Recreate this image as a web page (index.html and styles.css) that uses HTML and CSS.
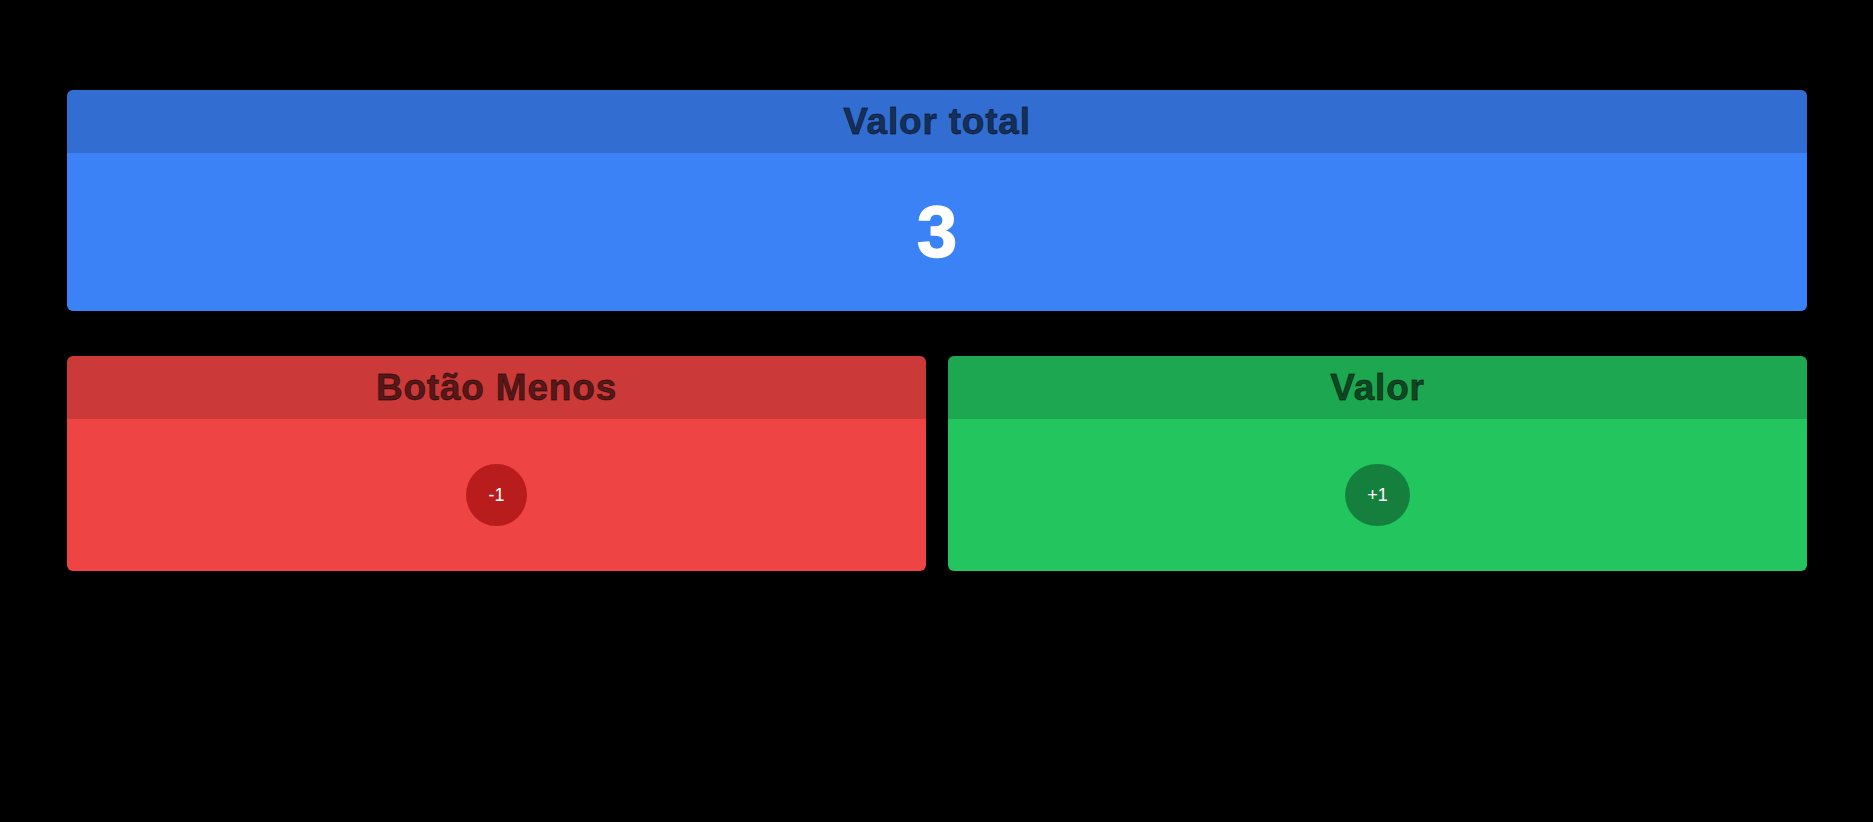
FILE: index.html
```html
<!DOCTYPE html>
<html lang="pt">
<head>
<meta charset="utf-8">
<title>Contador</title>
<link rel="stylesheet" href="styles.css">
</head>
<body>
<main class="page">
  <section class="card card-blue">
    <header class="card-header">Valor total</header>
    <div class="card-body">
      <span class="total">3</span>
    </div>
  </section>
  <div class="row">
    <section class="card card-red">
      <header class="card-header">Botão Menos</header>
      <div class="card-body">
        <button class="btn btn-red">-1</button>
      </div>
    </section>
    <section class="card card-green">
      <header class="card-header">Valor</header>
      <div class="card-body">
        <button class="btn btn-green">+1</button>
      </div>
    </section>
  </div>
</main>
</body>
</html>
```
FILE: styles.css
```css
html, body {
  margin: 0;
  padding: 0;
  background: #000;
  height: 100%;
}
body {
  font-family: "Liberation Sans", Arial, sans-serif;
}
.page {
  padding: 90px 66px 0 67px;
  display: flex;
  flex-direction: column;
  gap: 45px;
}
.row {
  display: grid;
  grid-template-columns: 1fr 1fr;
  gap: 22px;
}
.card {
  border-radius: 6px;
  overflow: hidden;
  display: flex;
  flex-direction: column;
}
.card-header {
  height: 63px;
  display: flex;
  align-items: center;
  justify-content: center;
  background: rgba(0, 0, 0, 0.15);
  color: rgba(0, 0, 0, 0.58);
  font-weight: bold;
  font-size: 37px;
  letter-spacing: 0.8px;
  -webkit-text-stroke: 0.8px rgba(0, 0, 0, 0.58);
}
.card-blue { background: #3b82f6; }
.card-red { background: #ef4444; }
.card-green { background: #22c55e; }
.card-blue .card-body { height: 158px; }
.row .card-body { height: 152px; }
.card-body {
  display: flex;
  align-items: center;
  justify-content: center;
}
.total {
  color: #fff;
  font-weight: bold;
  font-size: 72px;
  line-height: 1;
  -webkit-text-stroke: 1.5px #fff;
}
.btn {
  border: none;
  border-radius: 50%;
  color: #fff;
  font-family: "Liberation Sans", Arial, sans-serif;
  font-size: 18px;
  line-height: 20px;
  padding: 21px 22px;
  cursor: pointer;
}
.btn-red { background: #b91c1c; }
.btn-green { background: #15803d; }
```
